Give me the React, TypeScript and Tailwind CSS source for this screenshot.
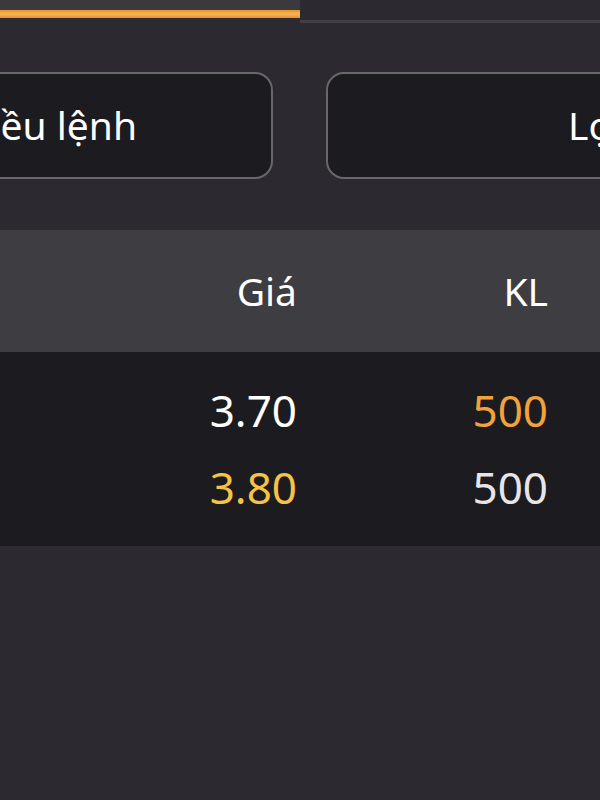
const rows = [
  { price: "3.70", priceColor: "text-white", vol: "500", volColor: "text-[#f2a23a]" },
  { price: "3.80", priceColor: "text-[#f6c445]", vol: "500", volColor: "text-[#e6e6e8]" },
];

export default function App() {
  return (
    <div className="w-[600px] h-[800px] overflow-hidden bg-[#2c2a30] font-['Noto_Sans',sans-serif] text-white">
      {/* tab strip */}
      <div className="flex h-[23px]">
        <div className="w-[300px] flex flex-col">
          <div className="h-[10px] bg-[#3a393e]" />
          <div className="h-[8px] bg-gradient-to-b from-[#e8912c] via-[#f6b555] to-[#e8912c]" />
        </div>
        <div className="flex-1 flex flex-col justify-end">
          <div className="h-[3px] bg-[#403f44]" />
        </div>
      </div>

      {/* buttons */}
      <div className="flex mt-[49px] h-[107px] gap-[53px]">
        <div className="shrink-0 w-[440px] ml-[-167px] rounded-[18px] border-2 border-[#68676c] bg-[#1c1b1f] flex items-center justify-end pr-[134px] text-[39px] whitespace-nowrap">
          Nhiều lệnh
        </div>
        <div className="shrink-0 w-[440px] rounded-[18px] border-2 border-[#68676c] bg-[#1c1b1f] flex items-center pl-[240px] text-[39px] whitespace-nowrap">
          Lọc lệnh
        </div>
      </div>

      {/* table header */}
      <div className="mt-[51px] h-[122px] bg-[#3e3d42] flex items-center text-[39px]">
        <div className="w-[297px] text-right">Giá</div>
        <div className="w-[251px] text-right">KL</div>
      </div>

      {/* rows */}
      <div className="bg-[#1c1b1f] pt-[19px] pb-[21px]">
        {rows.map((r, i) => (
          <div key={i} className="flex items-center h-[77px] text-[44px]">
            <div className={`w-[297px] text-right ${r.priceColor}`}>{r.price}</div>
            <div className={`w-[251px] text-right ${r.volColor}`}>{r.vol}</div>
          </div>
        ))}
      </div>
    </div>
  );
}
